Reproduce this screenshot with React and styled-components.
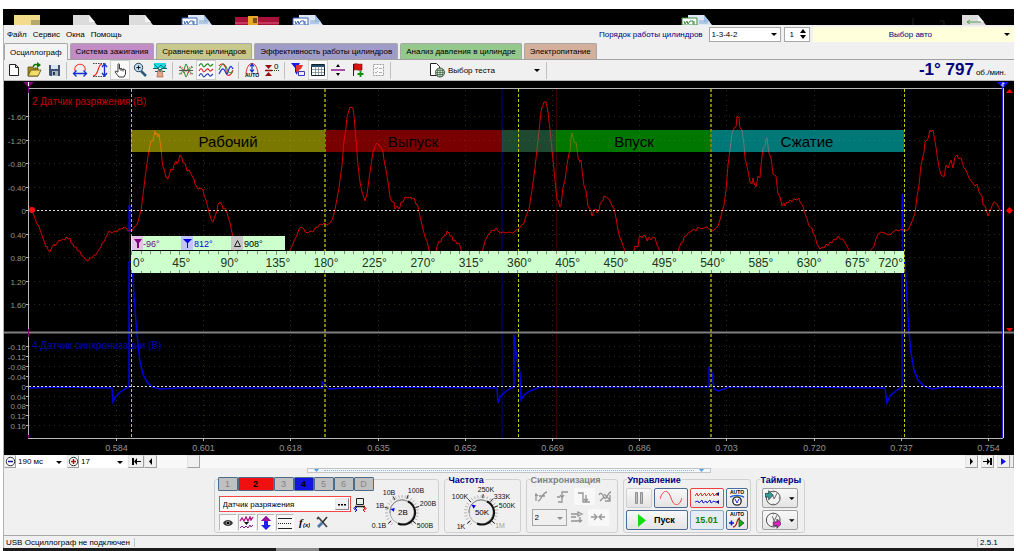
import { useState } from "react";
import styled, { createGlobalStyle } from "styled-components";

const GlobalStyle = createGlobalStyle`
  * {
    box-sizing: border-box;
  }
  body {
    margin: 0;
    background: #fff;
    font-family: "Liberation Sans", Arial, sans-serif;
    font-size: 8px;
    color: #000;
  }
  button, input, select {
    font: inherit;
    color: inherit;
    margin: 0;
  }
`;

const Page = styled.div`
  padding: 9px 10px 0 3px;
`;

const Window = styled.main`
  background: #f0f0f0;
  border-left: 1px solid #b4b4b4;
`;

/* ---------- desktop behind the window ---------- */

const DesktopStrip = styled.svg`
  display: block;
  width: 100%;
  background: #000;
`;

function Doc({ x, tag }) {
  return (
    <g transform={`translate(${x} 0)`}>
      <path d="M0 6h16l8 10H0z" fill={tag ? "#dbe7f5" : "#dcdcdc"} />
      <path d="M16 6v7h6z" fill={tag ? "#9fc0e6" : "#f4f4f4"} />
      {tag && <path d="M-6 9h15v7H-6z" fill="#fff" stroke={tag} />}
      {tag && <path d="M-4 12l1 3 2-3 1 3 2-3M2 12h3v3M6 12v4" stroke={tag} fill="none" />}
      {tag && <path d="M11 12h7M11 14h9" stroke="#8aa8d0" />}
    </g>
  );
}

function Desktop() {
  return (
    <DesktopStrip viewBox="3 0 1011 16" aria-hidden="true">
      <path d="M14 6h26v10H14z" fill="#f2dc8c" />
      <path d="M31 11h9v5h-9z" fill="#b5a76c" />
      <Doc x={73} />
      <Doc x={129} />
      <Doc x={188} tag="#3a62b4" />
      <path d="M235 8h44v8h-44z" fill="#a8123a" />
      <path d="M235 14h44" stroke="#e06080" />
      <path d="M248 7h10v9h-10z" fill="#e8a828" />
      <path d="M253 9h4v5h-4z" fill="#7c5210" />
      <Doc x={299} tag="#3a62b4" />
      <Doc x={688} tag="#3c8a3c" />
      <Doc x={962} />
      <path d="M967 13h14M970 11l-3 2 3 2" stroke="#58a058" fill="none" />
      <path d="M940 12h4v4M913 9v7" stroke="#222" fill="none" />
    </DesktopStrip>
  );
}

/* ---------- menu ---------- */

const MenuBar = styled.nav`
  display: flex;
  align-items: center;
  height: 18px;
  gap: 6px;
  padding-left: 3px;
  a {
    color: #000;
    text-decoration: none;
  }
`;

const OrderLabel = styled.label`
  margin-left: auto;
  color: #000080;
`;

const SelectBox = styled.span`
  position: relative;
  display: inline-block;
  width: ${(p) => p.$width}px;
  height: ${(p) => p.$height || 15}px;
  select {
    appearance: none;
    width: 100%;
    height: 100%;
    padding: 0 2px;
    border: ${(p) => (p.$flat ? "0" : "1px solid #a8a8a8")};
    border-radius: 0;
    background: ${(p) => (p.$disabled ? "#f0f0f0" : "#fff")};
    opacity: 1;
  }
  svg {
    position: absolute;
    right: 4px;
    top: calc(50% - 1px);
    pointer-events: none;
  }
`;

const Spinner = styled.span`
  display: flex;
  align-items: center;
  width: 26px;
  height: 15px;
  margin: 0 -3px;
  border: 1px solid #a8a8a8;
  background: #fff;
  input {
    width: 14px;
    padding: 0 0 0 5px;
    border: 0;
    background: transparent;
    appearance: textfield;
    outline: 0;
  }
  input::-webkit-inner-spin-button {
    display: none;
  }
`;

const CarButton = styled.button`
  display: flex;
  align-items: center;
  width: 20%;
  height: 15px;
  padding: 0 4px;
  border: 0;
  background: #ffffdc;
  color: #000080;
  span {
    flex: 1;
  }
`;

function Caret({ color = "#000" }) {
  return (
    <svg width="6" height="3" viewBox="0 0 6 3">
      <path d="M0 0h6L3 3z" fill={color} />
    </svg>
  );
}

function Select({ label, width, height, flat, disabled, options, caret, id }) {
  return (
    <SelectBox $width={width} $height={height} $flat={flat} $disabled={disabled}>
      <select id={id} aria-label={label} disabled={disabled}>
        {options.map((o) => (
          <option key={o}>{o}</option>
        ))}
      </select>
      <Caret color={caret} />
    </SelectBox>
  );
}

function Menu() {
  return (
    <MenuBar>
      {["Файл", "Сервис", "Окна", "Помощь"].map((m) => (
        <a href="#" key={m}>
          {m}
        </a>
      ))}
      <OrderLabel htmlFor="order">Порядок работы цилиндров</OrderLabel>
      <Select id="order" width={72} options={["1-3-4-2", "1-2-4-3"]} />
      <Spinner>
        <input type="number" defaultValue="1" aria-label="Цилиндр" />
        <svg width="8" height="10" viewBox="0 0 8 10">
          <path d="M1 4h6L4 0zM1 6h6L4 10z" />
        </svg>
      </Spinner>
      <CarButton>
        <span>Выбор авто</span>
        <Caret />
      </CarButton>
    </MenuBar>
  );
}

/* ---------- tabs ---------- */

const TabList = styled.div`
  display: flex;
  gap: 2px;
  height: 17px;
  border-bottom: 1px solid #a0a0a0;
`;

const Tab = styled.button`
  height: ${(p) => (p.$active ? 17 : 16)}px;
  padding: 0 5px;
  border: 1px solid #a8a8a8;
  border-bottom: 0;
  border-radius: 2px 2px 0 0;
  background: ${(p) => p.$color};
  white-space: nowrap;
`;

const tabs = [
  ["Осциллограф", "#f4f4f4"],
  ["Система зажигания", "#c48cc4"],
  ["Сравнение цилиндров", "#c8c88c"],
  ["Эффективность работы цилиндров", "#a09cc8"],
  ["Анализ давления в цилиндре", "#94c88c"],
  ["Электропитание", "#d4b09c"],
];

function Tabs() {
  const [active, setActive] = useState(0);
  return (
    <TabList role="tablist">
      {tabs.map(([name, color], i) => (
        <Tab
          key={name}
          role="tab"
          aria-selected={i === active}
          $active={i === active}
          $color={color}
          onClick={() => setActive(i)}
        >
          {name}
        </Tab>
      ))}
    </TabList>
  );
}

/* ---------- toolbar ---------- */

const Toolbar = styled.div`
  display: flex;
  align-items: center;
  height: 21px;
  border-bottom: 1px solid #b8b8b8;
`;

const ToolButton = styled.button`
  width: 20px;
  height: 20px;
  padding: 0;
  border: 1px solid ${(p) => (p.$pressed ? "#d0d0d0" : "transparent")};
  background: ${(p) => (p.$pressed ? "#fafafa" : "transparent")};
  svg {
    display: block;
    margin: -1px;
  }
`;

const Separator = styled.i`
  width: 1px;
  height: 17px;
  margin: 0 ${(p) => p.$right || 3}px 0 2px;
  background: #c0c0c0;
`;

const TestButton = styled.button`
  display: flex;
  align-items: center;
  gap: 3px;
  width: 115px;
  height: 20px;
  padding: 0 4px 0 0;
  border: 0;
  background: transparent;
  span {
    flex: 1;
    text-align: left;
  }
`;

const Readout = styled.output`
  margin-left: auto;
  margin-right: 8px;
  color: #000080;
  white-space: nowrap;
  b {
    font-size: 17px;
  }
  small {
    margin-left: 2px;
    font-size: 8px;
    color: #000;
  }
`;

const icons = {
  new: (
    <path d="M5.500 4.500h6l3 3v8h-9zM11.500 4.500v3h3" fill="#fff" stroke="#222" />
  ),
  open: (
    <>
      <path d="M4 7h4l1 1h5v8H4z" fill="#a88a20" stroke="#554a10" strokeWidth=".8" />
      <path d="M4 16l3-6h10l-3 6z" fill="#f4dc68" stroke="#554a10" strokeWidth=".8" />
      <path d="M9 7c1-3 3-3 5-2" stroke="#087808" strokeWidth="1.500" fill="none" />
      <path d="M13 2l4 3-4 3z" fill="#087808" />
    </>
  ),
  save: (
    <>
      <path d="M5 5h11v11H6l-1-1z" fill="#405070" />
      <path d="M7 5h7v4H7z" fill="#d8e4f0" />
      <path d="M8 11h6v5H8z" fill="#a8b4c4" />
      <path d="M9 12h2v3H9z" fill="#283850" />
    </>
  ),
  arc: (
    <>
      <path d="M5 11C3 2 17 2 15 11" stroke="#f02020" fill="none" />
      <path d="M3.500 13.500h13M6.500 10.500l-3 3 3 3M13.500 10.500l3 3-3 3" stroke="#1030d0" fill="none" strokeWidth="1.300" />
    </>
  ),
  height: (
    <>
      <path d="M3 16c6 0 4-11 9-12" stroke="#f02020" strokeWidth="1.200" fill="none" />
      <path d="M3 3.500h13M3 16.500h13" stroke="#444" strokeDasharray="1.500 1" />
      <path d="M14.500 4v12M12 7l2.500-3L17 7M12 13l2.500 3 2.500-3" stroke="#1030d0" fill="none" strokeWidth="1.300" />
    </>
  ),
  hand: (
    <path
      d="M8 12V4.500c0-1 1.500-1 1.500 0V9l1.500-.5 1.500.8 1.500-.2 1.500 1v4L14 17H9l-4-5c0-1 1.500-1.500 2 0zM11 8.500V11M13 9v2.500"
      fill="#fff"
      stroke="#222"
      strokeWidth=".9"
    />
  ),
  zoom: (
    <>
      <path d="M11 11l5 5" stroke="#2a5a78" strokeWidth="2.500" />
      <circle cx="8.500" cy="7.500" r="4.200" fill="#b8dcf4" stroke="#345" />
      <path d="M6.500 7.500h4M8.500 5.500v4" stroke="#111" />
    </>
  ),
  range: (
    <>
      <path d="M4 3h12v5H4z" fill="#20d8e0" />
      <path d="M4 4l4 4 3-3 3 3 2-3" stroke="#107880" fill="none" />
      <path d="M3 8.500h5l2 2 2-2h5M5 11.500h10" stroke="#086868" strokeWidth="1.200" fill="none" />
      <path d="M8 10l-1 7h6l-1-7-2 2z" fill="#e0a888" stroke="#a05030" strokeWidth=".6" />
    </>
  ),
  cross: (
    <>
      <path d="M3 7c2 0 3 3 4 3 2 0 2-6 3-6s2 6 3 6 2-3 4-3" stroke="#208a20" fill="none" />
      <path d="M3 14c2 0 3-3 4-3 2 0 2 6 3 6s2-6 3-6 2 3 4 3" stroke="#208a20" fill="none" />
      <path d="M4 6l12 9M16 6L4 15" stroke="#e03030" strokeDasharray="1.500 1" />
      <path d="M3 10.500h14" stroke="#555" />
    </>
  ),
  three: (
    <>
      <path d="M3 6c2-4 3-2 4 0s2 0 3-1 2-2 3 0 2 1 4-1" stroke="#208a20" strokeWidth="1.200" fill="none" />
      <path d="M3 11c2-4 3-2 4 0s2 0 3-1 2-2 3 0 2 1 4-1" stroke="#e03030" strokeWidth="1.200" fill="none" />
      <path d="M3 16c2-4 3-2 4 0s2 0 3-1 2-2 3 0 2 1 4-1" stroke="#2848b0" strokeWidth="1.200" fill="none" />
    </>
  ),
  mixed: (
    <>
      <path d="M3 6c4-5 7 0 7 5s4 7 7-1" stroke="#e03030" fill="none" strokeWidth="1.200" />
      <path d="M3 14c4-8 5-5 7-1 2 5 3-13 7-4" stroke="#2030d0" fill="none" strokeWidth="1.200" />
      <path d="M3 10c3-8 6-7 8-1s3 3 6 3" stroke="#208a20" fill="none" />
    </>
  ),
  auto: (
    <>
      <path d="M4 14C5 0 15 0 16 14" stroke="#e03030" fill="none" />
      <path d="M10 4v8M8 6.500L10 4l2 2.500M8 9.500l2 2.500 2-2.500" stroke="#1030d0" fill="none" strokeWidth="1.200" />
      <text x="10" y="17" fontSize="5" fontWeight="bold" textAnchor="middle">
        AUTO
      </text>
    </>
  ),
  zero: (
    <>
      <path d="M3 5h7L6.500 9zM3 16h7l-3.500-4z" fill="#980c0c" />
      <path d="M3 10.500h7" stroke="#980c0c" strokeWidth="1.500" />
      <path d="M10 10.500h7" stroke="#333" strokeDasharray="1 1" />
      <text x="12" y="9" fontSize="8">
        0
      </text>
    </>
  ),
  filter: (
    <>
      <path d="M3 3h9L9 8v7L7 12V8z" fill="#1818e8" />
      <path d="M8 5l7 0-2 4-2 1-1 4-2-3z" fill="#e03030" />
      <path d="M10.500 11.500h6v4h-6z" fill="#f0f0ff" stroke="#3838b0" />
    </>
  ),
  table: (
    <>
      <path d="M3.500 4.500h13v11h-13z" fill="#fff" stroke="#123" />
      <path d="M3 5h14v2H3z" fill="#204868" />
      <path d="M7.500 6v9M10.500 6v9M13.500 6v9M4 9.500h12M4 12.500h12" stroke="#68808c" strokeWidth=".7" />
    </>
  ),
  split: (
    <>
      <path d="M3 10h14" stroke="#901890" strokeWidth="1.500" />
      <path d="M8 7h4l-2-3zM8 13h4l-2 3z" />
    </>
  ),
  flag: (
    <>
      <path d="M5.500 4v12" stroke="#222" />
      <path d="M6 4c3-1 5 1 8 0v6c-3 1-5-1-8 0z" fill="#e01010" stroke="#600" strokeWidth=".6" />
      <path d="M12.500 11v6M9.500 14h6" stroke="#109010" strokeWidth="1.800" />
    </>
  ),
  list: (
    <>
      <path d="M5.500 4.500h10v11h-10z" fill="#fafafa" stroke="#999" strokeDasharray="2 1" />
      <path d="M7 8l1 1 2-2M7 12l1 1 2-2M11 8.500h3M11 12.500h3" stroke="#aaa" fill="none" />
    </>
  ),
};

const tools = [
  ["new", "Новый"],
  ["open", "Открыть"],
  ["save", "Сохранить"],
  null,
  ["arc", "Период"],
  ["height", "Амплитуда"],
  ["hand", "Перемещение", true],
  ["zoom", "Масштаб"],
  ["range", "Диапазон"],
  null,
  ["cross", "Совмещение"],
  ["three", "Раздельно", true],
  ["mixed", "Вместе"],
  null,
  ["auto", "Авто"],
  ["zero", "Ноль"],
  null,
  ["filter", "Фильтр"],
  ["table", "Таблица", true],
  ["split", "Разделить"],
  ["flag", "Метка"],
  ["list", "Список"],
  null,
];

function Tools() {
  return (
    <Toolbar>
      {tools.map((t, i) =>
        t ? (
          <ToolButton key={t[0]} aria-label={t[1]} $pressed={t[2]}>
            <svg width="20" height="20" viewBox="0 0 20 20" fill="#000">
              {icons[t[0]]}
            </svg>
          </ToolButton>
        ) : (
          <Separator key={i} $right={i === tools.length - 1 ? 38 : 3} />
        )
      )}
      <TestButton>
        <svg width="16" height="16" viewBox="0 0 16 16" fill="none">
          <path d="M1.500 1.500h6l3 3v9h-9z" fill="#fff" stroke="#222" />
          <circle cx="11" cy="10.500" r="4.500" fill="#d8e8d8" stroke="#385838" />
          <path d="M6.500 10.500h9M11 6v9M9 6.500c-1 3-1 5 0 8M13 6.500c1 3 1 5 0 8M7.500 8.500h7M7.500 12.500h7" stroke="#385838" strokeWidth=".7" />
        </svg>
        <span>Выбор теста</span>
        <Caret />
      </TestButton>
      <Separator />
      <Readout>
        <b>-1° 797</b>
        <small>об./мин.</small>
      </Readout>
    </Toolbar>
  );
}

/* ---------- oscillogram ---------- */

const Scope = styled.svg`
  display: block;
  width: 100%;
  background: #000;
  font-family: "Liberation Sans", Arial, sans-serif;
`;

const times = ["0.584", "0.601", "0.618", "0.635", "0.652", "0.669", "0.686", "0.703", "0.720", "0.737", "0.754"];
const topScale = ["-1.60", "-1.20", "-0.80", "-0.40", "0", "0.40", "0.80", "1.20", "1.60"];
const lowScale = ["-0.16", "-0.12", "-0.08", "-0.04", "0", "0.04", "0.08", "0.12", "0.16"];
const timeX = (i) => Math.round(116 + i * 87.2) + 0.5;
const topY = (i) => Math.round(116 + i * 23.5) + 0.5;
const lowY = (i) => Math.round(346 + i * 9.9) + 0.5;

// one band per stroke of the cycle
const phases = [
  { name: "Рабочий", from: 131, to: 325, text: 228, color: "#f4f000" },
  { name: "Выпуск", from: 325, to: 502, text: 413, color: "#f00000" },
  { name: "", from: 502, to: 556, text: 529, color: "#3c9060" },
  { name: "Впуск", from: 556, to: 711, text: 634, color: "#00f000" },
  { name: "Сжатие", from: 711, to: 904, text: 807, color: "#00f0f0" },
];

const vacuum =
  "29,206 32,210 34,216 36,221 37,224 39,226 40,230 43,238 46,247 47,246 48,250 50,252 52,247 54,244 55,246 57,243 59,240 60,241 63,239 65,240 66,237 68,239 70,238 71,243 73,244 74,247 76,247 78,251 80,251 81,255 83,256 85,259 88,261 90,258 92,258 94,255 96,255 98,251 101,247 102,243 104,242 106,237 109,231 112,233 115,231 117,232 119,229 122,229 124,227 126,228 128,231 130,230 132,231 134,227 136,226 138,222 141,210 143,195 146,170 149,150 151,141 153,141 155,131 156,135 157,133 158,137 159,134 161,148 162,160 163,167 164,169 166,177 168,179 170,172 171,169 173,170 174,165 176,161 177,164 178,162 180,155 182,158 183,163 185,163 187,171 189,170 191,174 194,179 195,184 198,189 201,188 203,190 204,195 206,200 208,208 209,212 211,219 213,222 215,216 217,211 218,204 220,202 222,205 223,209 225,208 227,213 230,223 233,237 235,262 284,262 290,250 293,244 294,241 297,235 298,232 299,229 301,227 304,229 305,232 308,233 310,231 313,232 315,228 318,227 320,224 322,225 324,223 327,225 330,223 332,220 334,214 336,204 339,188 342,165 344,140 346,128 347,117 349,110 350,107 353,108 354,116 356,140 358,165 360,182 362,192 363,195 365,201 367,194 370,172 373,152 375,146 377,143 379,145 381,147 383,152 384,160 386,170 388,182 390,197 392,202 394,202 395,209 397,206 399,209 400,207 401,202 403,202 405,197 408,198 410,197 412,199 414,198 416,204 418,206 419,212 422,225 425,237 427,241 429,250 431,262 434,262 437,246 439,241 441,242 442,238 444,236 446,235 447,231 449,233 450,236 452,236 453,241 455,240 457,244 459,243 461,249 463,262 480,262 483,249 485,241 488,235 490,233 492,230 494,231 496,228 498,231 500,233 503,232 506,233 509,232 513,233 516,230 518,230 521,226 524,223 526,216 529,209 532,190 535,168 538,140 541,112 542,107 543,105 544,102 546,102 548,112 550,130 553,160 556,190 557,199 558,200 560,207 561,205 563,188 565,180 567,165 569,153 570,152 571,139 572,133 574,142 575,143 576,142 577,149 578,158 580,162 581,160 582,170 584,186 586,191 588,206 590,209 591,211 592,216 594,210 596,209 597,213 599,210 600,204 603,200 604,196 606,197 609,199 611,203 612,206 614,208 616,218 618,230 619,235 621,240 624,248 626,262 632,262 634,250 635,246 638,247 639,238 640,236 642,238 644,235 646,237 647,241 649,237 651,240 653,237 655,238 657,245 659,249 661,262 676,262 679,248 681,243 683,242 684,237 687,235 688,233 692,231 693,229 696,231 698,227 701,229 704,228 707,227 710,230 713,231 716,228 718,226 720,220 722,212 724,205 726,190 728,165 731,142 732,133 734,128 736,127 737,116 739,118 740,128 742,130 744,145 745,158 748,171 750,182 752,184 753,178 754,183 756,187 757,182 758,176 760,178 761,165 763,148 765,146 766,140 767,138 768,146 769,153 771,158 773,174 776,176 777,186 778,194 780,197 782,206 784,203 785,206 787,202 788,203 790,200 792,202 794,199 797,200 799,198 800,202 803,206 804,211 807,219 809,226 812,228 813,233 815,236 817,244 820,249 822,247 824,248 826,244 828,246 830,242 832,243 834,239 836,240 838,236 840,239 843,239 845,243 847,246 849,250 853,262 866,262 871,250 874,246 876,239 878,234 881,232 885,233 888,235 891,234 893,232 896,230 899,231 901,229 904,231 908,230 910,226 913,219 915,213 917,197 919,185 921,165 924,152 925,142 928,139 930,130 931,132 933,130 934,136 936,147 937,155 939,167 941,175 944,177 946,165 948,168 951,160 953,168 955,157 957,155 959,159 961,158 964,168 966,170 969,178 972,182 975,186 977,184 979,192 982,196 983,205 985,206 988,216 990,211 992,206 994,202 997,204 1000,210 1002,211";

const sync =
  "29,388 60,387 112,388 113,402 115,398 119,393 125,389 129,387 129,262 132,262 134,295 136,322 138,345 140,362 143,374 147,382 152,387 160,389 178,388 322,388 322,382 325,385 329,389 345,388 400,387 497,388 498,403 500,397 505,392 511,388 514,387 514,335 516,352 518,364 520,372 521,400 524,395 530,391 540,387 600,387 709,387 709,367 712,373 714,389 718,391 730,387 800,387 885,388 887,403 890,396 897,390 902,387 902,262 905,262 907,300 909,332 911,353 914,370 918,380 924,386 932,389 945,387 1002,388";

function Ruler() {
  const ticks = Array.from({ length: 81 }, (_, i) => i);
  return (
    <g>
      <rect x="131" y="236" width="154" height="14" fill="#ccffcc" />
      <rect x="132" y="236" width="11" height="14" fill="#e4c4e4" />
      <rect x="181" y="236" width="12" height="14" fill="#c4c4fc" />
      <rect x="231" y="236" width="12" height="14" fill="#c8c8c8" />
      <path d="M134 239h8l-3 4v5h-2v-5z" fill="#800080" />
      <path d="M183 239h9l-4 4v5h-1v-5z" fill="#0000f0" />
      <path d="M234.500 246.500h6l-3-6z" fill="none" stroke="#222" />
      <g fontSize="9">
        <text x="143" y="247" fill="#800080">-96°</text>
        <text x="194" y="247" fill="#0000f0">812°</text>
        <text x="244" y="247">908°</text>
      </g>
      <rect x="131" y="251" width="773" height="22" fill="#ccffcc" />
      {ticks.map((i) => {
        const x = Math.round(131 + i * 9.66) + 0.5;
        return (
          <path key={i} d={`M${x} 251v${i % 5 ? 3 : 4}M${x} 273v${i % 5 ? -2 : -3}`} stroke="#444" strokeWidth=".6" />
        );
      })}
      <g fontSize="12" fill="#223322">
        <text x="133" y="267">0°</text>
        {ticks.slice(1, 16).map((i) => (
          <text key={i} x={133 + i * 48.3} y="267" textAnchor="middle">
            {i * 45}°
          </text>
        ))}
        <text x="903" y="267" textAnchor="end">720°</text>
      </g>
    </g>
  );
}

function Oscillogram() {
  return (
    <Scope viewBox="4 81 1010 374" role="img" aria-label="Осциллограмма">
      <g stroke="#2c2c14" strokeDasharray="1 4" fill="none">
        {times.map((t, i) => (
          <path key={t} d={`M${timeX(i)} 90V438`} />
        ))}
        {topScale.map((t, i) => (
          <path key={t} d={`M29 ${topY(i)}H1002`} />
        ))}
        {lowScale.map((t, i) => (
          <path key={t} d={`M29 ${lowY(i)}H1002`} />
        ))}
      </g>

      <g fill="#949494" fontSize="8" textAnchor="end">
        {topScale.map((t, i) => (
          <text key={t} x="26" y={topY(i) + 3}>{t}</text>
        ))}
        {lowScale.map((t, i) => (
          <text key={t} x="26" y={lowY(i) + 3}>{t}</text>
        ))}
      </g>
      <g fill="#949494" fontSize="9" textAnchor="middle">
        {times.map((t, i) => (
          <text key={t} x={timeX(i)} y="451">{t}</text>
        ))}
      </g>

      <path d="M502 89V438" stroke="#000040" strokeWidth="2" />
      <path d="M556.500 89V438" stroke="#380000" />

      <path d="M129.500 195V262M902.500 193V262" stroke="#0000c8" />
      <path d="M129.500 205V232M902.500 197V232" stroke="#0000ff" strokeWidth="2" />
      <polyline points={sync} fill="none" stroke="#0000e0" strokeWidth="1.500" />

      <polyline points={vacuum} fill="none" stroke="#d00000" strokeWidth="1" />

      <text x="32" y="105" fontSize="10" fill="#c80000">2 Датчик разряжения (В)</text>
      <text x="32" y="349" fontSize="10" fill="#0000b4">4 Датчик синхронизации (В)</text>

      {phases.map((p) => (
        <g key={p.from}>
          <rect x={p.from} y="130" width={p.to - p.from} height="22" fill={p.color} opacity=".5" />
          <text x={p.text} y="147" fontSize="15" textAnchor="middle" fill="#000">{p.name}</text>
        </g>
      ))}

      <path d="M29 210.500H1002M29 386.500H1002" stroke="#d8d8d8" strokeDasharray="2 2" />
      <path d="M131.500 89V438M518.500 89V438M904.500 89V438" stroke="#c8c800" strokeDasharray="3 2" />
      <path d="M325 89V438M711 89V438" stroke="#808000" strokeWidth="2" strokeDasharray="3 2" />

      <Ruler />

      <path d="M4 332.500H1014" stroke="#808080" strokeWidth="2" />
      <path d="M28.500 438V88.500H1002M28 438.500H1003" fill="none" stroke="#b8b8b8" />
      <path d="M28.500 329v8M28.500 435v3" stroke="#800080" />
      {topScale.map((t, i) => (
        <path key={t} d={`M26 ${topY(i)}h3`} stroke="#b8b8b8" />
      ))}
      {lowScale.map((t, i) => (
        <path key={t} d={`M26 ${lowY(i)}h3`} stroke="#b8b8b8" />
      ))}
      {times.map((t, i) => (
        <path key={t} d={`M${timeX(i)} 438v3`} stroke="#b8b8b8" />
      ))}
      <path d="M1002.500 84V438" stroke="#2020e0" />
      <path d="M1003.500 88V438" stroke="#e0e0ff" />
      <path d="M23 82h11l-5 5v6h-1v-6z" fill="#800080" />
      <path d="M28.500 82v4" stroke="#fff" />
      <path d="M997 82h12l-6 6z" fill="#1010ff" />
      <path d="M1002 83h2v1h-2v2h2" stroke="#fff" fill="none" strokeWidth=".8" />
      <circle cx="32" cy="210" r="3" fill="#f01010" />
      <path d="M1009.500 207l3.500 3.500-3.500 3.500-3.500-3.500zM1006 93h7l-3.500-4zM1006 328h7l-3.500 4z" fill="#f00" />
    </Scope>
  );
}

/* ---------- time scale and scroll ---------- */

const ScrollRow = styled.div`
  display: flex;
  align-items: center;
  height: 13px;
  background: #f8f8f8;
`;

const ScrollButton = styled.button`
  display: grid;
  place-items: center;
  width: ${(p) => p.$width || 13}px;
  height: 13px;
  margin-left: ${(p) => p.$gap || 0}px;
  padding: 0;
  border: 1px solid;
  border-color: #e4e4e4 #a0a0a0 #a0a0a0 #e4e4e4;
  background: #f0f0f0;
`;

const Track = styled.div`
  flex: 1;
  padding-left: 30px;
`;

const Thumb = styled.div`
  width: 13px;
  height: 13px;
  border: 1px solid;
  border-color: #e4e4e4 #a0a0a0 #a0a0a0 #e4e4e4;
  background: #f0f0f0;
`;

const Splitter = styled.div`
  display: flex;
  align-items: center;
  justify-content: space-between;
  width: 40%;
  height: 5px;
  margin: 0 auto;
  padding: 0 4px;
  border: 1px solid #c4c4c4;
  background: #f4f8fc;
  i {
    flex: 1;
    margin: 0 3px;
    border-top: 1px dotted #88b4e8;
  }
`;

function Sign({ plus }) {
  const color = plus ? "#b01010" : "#1010a0";
  return (
    <svg width="11" height="11" viewBox="0 0 11 11" fill="none">
      <circle cx="5.500" cy="5.500" r="4.200" stroke="#333" fill="#fff" />
      <path d={plus ? "M3 5.500h5M5.500 3v5" : "M3 5.500h5"} stroke={color} strokeWidth="1.500" />
    </svg>
  );
}

function Glyph({ d, color = "#000" }) {
  return (
    <svg width="9" height="7" viewBox="0 0 9 7">
      <path d={d} fill={color} />
    </svg>
  );
}

function TimeScale() {
  return (
    <>
      <ScrollRow>
        <ScrollButton $width={12} aria-label="Уменьшить"><Sign /></ScrollButton>
        <Select label="Развёртка" width={50} height={13} flat options={["190 мс", "100 мс"]} />
        <ScrollButton $width={12} $gap={1} aria-label="Увеличить"><Sign plus /></ScrollButton>
        <Select label="Масштаб" width={48} height={13} flat options={["17", "34"]} />
        <ScrollButton $width={16} $gap={1} aria-label="В начало">
          <Glyph d="M0 0h2v7H0zM2 3.500L5 0v3h4v1H5v3z" />
        </ScrollButton>
        <ScrollButton aria-label="Назад"><Glyph d="M6 0v7L3 3.500z" /></ScrollButton>
        <Track><Thumb /></Track>
        <ScrollButton aria-label="Вперёд"><Glyph d="M3 0v7l3-3.500z" /></ScrollButton>
        <ScrollButton $gap={3} aria-label="В конец">
          <Glyph d="M7 0h2v7H7zM7 3.500L4 0v3H0v1h4v3z" />
        </ScrollButton>
        <ScrollButton $gap={3} aria-label="Следить"><Glyph d="M2 0v7l5-3.500z" color="#1010f0" /></ScrollButton>
        <ScrollButton $width={4} aria-hidden="true" />
      </ScrollRow>
      <Splitter>
        <Glyph d="M2 2h5L4.500 5z" color="#50a0e8" />
        <i />
        <Glyph d="M2 2h5L4.500 5z" color="#50a0e8" />
      </Splitter>
    </>
  );
}

/* ---------- control panel ---------- */

const Panel = styled.div`
  display: flex;
  justify-content: center;
  gap: 5px;
  padding: 6px 0 2px;
  border-bottom: 1px solid #a8a8a8;
`;

const Group = styled.fieldset`
  position: relative;
  width: ${(p) => p.$width}px;
  height: 54px;
  margin: 0;
  padding: ${(p) => p.$pad || "0"};
  border: 1px solid #d0d0d0;
  border-radius: 3px;
`;

const GroupTitle = styled.legend`
  position: absolute;
  top: -5px;
  left: 3px;
  padding: 0 1px;
  line-height: 10px;
  font-size: 9px;
  font-weight: bold;
  color: ${(p) => (p.$muted ? "#808080" : "#000080")};
  background: #f0f0f0;
`;

const Row = styled.div`
  display: flex;
  align-items: center;
  gap: ${(p) => p.$gap || 0}px;
  margin-top: ${(p) => p.$top || 0}px;
`;

const ChannelLayout = styled.div`
  display: flex;
`;

const ChannelColumn = styled.div`
  width: 152px;
`;

// the channel keys stand on the frame of the group
const ChannelRow = styled.div`
  display: flex;
  margin: -3px 0 5px 3px;
`;

const SensorRow = styled.div`
  display: flex;
  align-items: center;
  gap: ${(p) => p.$gap || 0}px;
  padding-left: 4px;
  margin-bottom: 2px;
`;

const KnobSlot = styled.div`
  padding-top: 4px;
`;

const ChannelButton = styled.button`
  flex: none;
  width: ${(p) => (p.$wide ? 36 : 20)}px;
  height: 14px;
  padding: 0;
  border: 1px solid #4c6c8c;
  border-radius: 1px;
  background: ${(p) => p.$color || "#c0c0c0"};
  color: ${(p) => (p.$color ? "#000" : "#848484")};
  font-size: 9px;
  font-weight: ${(p) => (p.$color ? "bold" : "normal")};
`;

const SensorBox = styled.div`
  display: flex;
  width: 132px;
  height: 16px;
  padding: 1px;
  border: 1px solid #f04848;
  background: #fff;
  input {
    flex: 1;
    min-width: 0;
    padding: 0 2px;
    border: 0;
    background: transparent;
  }
  button {
    width: 14px;
    padding: 0;
    border: 1px solid;
    border-color: #e8e8e8 #888 #888 #e8e8e8;
    background: #f0f0f0;
    line-height: 6px;
  }
`;

const SmallTool = styled.button`
  width: 18px;
  height: 17px;
  padding: 0;
  border: 1px solid;
  border-color: ${(p) => (p.$pressed ? "#b8b8b8 #fff #fff #b8b8b8" : "transparent")};
  background: ${(p) => (p.$pressed ? "#f8f8f8" : "transparent")};
  svg {
    display: block;
    margin: auto;
  }
`;

const KnobBox = styled.label`
  position: relative;
  display: block;
  width: 70px;
  height: 47px;
  svg {
    display: block;
  }
  input {
    position: absolute;
    inset: 0;
    width: 100%;
    height: 100%;
    margin: 0;
    opacity: 0;
  }
`;

function Knob({ name, value, marks, pointer }) {
  const ticks = Array.from({ length: 25 }, (_, i) => 130 + i * 11.7);
  return (
    <KnobBox>
      <svg width="70" height="47" viewBox="0 0 70 47">
        {ticks.map((a) => {
          const c = Math.cos((a * Math.PI) / 180);
          const s = Math.sin((a * Math.PI) / 180);
          return (
            <path key={a} d={`M${35 + c * 14} ${28 + s * 14}L${35 + c * 17} ${28 + s * 17}`} stroke="#999" strokeWidth=".7" />
          );
        })}
        {marks.map((m) => {
          const c = Math.cos((m.angle * Math.PI) / 180);
          const s = Math.sin((m.angle * Math.PI) / 180);
          return (
            <path key={m.text} d={`M${35 + c * 14} ${28 + s * 14}L${35 + c * 18} ${28 + s * 18}`} stroke="#222" />
          );
        })}
        <circle cx="35" cy="28" r="12" fill="#ececec" stroke="#aaa" />
        <path d="M41 17.500A12 12 0 0 1 31 39.500" fill="none" stroke="#111" strokeWidth="2" />
        <path d="M41 17.500A12 12 0 0 0 23 29" fill="none" stroke="#888" />
        <path d="M0 0l4-2v4z" fill="#0000ff" transform={`rotate(${pointer} 35 28) translate(23 28)`} />
        <text x="36" y="31" fontSize="8" textAnchor="middle">{value}</text>
        <g fontSize="7" textAnchor="middle">
          {marks.map((m) => (
            <text key={m.text} x={m.x} y={m.y} fill={m.muted ? "#a0a0a0" : "#111"}>{m.text}</text>
          ))}
        </g>
      </svg>
      <input type="range" min="0" max="6" defaultValue="2" aria-label={name} />
    </KnobBox>
  );
}

const voltMarks = [
  { text: "0.1В", x: 12, y: 44, angle: 140 },
  { text: "1В", x: 13, y: 24, angle: 195 },
  { text: "10В", x: 22, y: 11, angle: 240 },
  { text: "100В", x: 49, y: 9, angle: 290 },
  { text: "200В", x: 61, y: 22, angle: 342 },
  { text: "500В", x: 58, y: 44, angle: 40 },
];

const rateMarks = [
  { text: "1K", x: 15, y: 45, angle: 140 },
  { text: "100K", x: 14, y: 15, angle: 225 },
  { text: "250K", x: 40, y: 8, angle: 277 },
  { text: "333K", x: 56, y: 15, angle: 312 },
  { text: "500K", x: 61, y: 24, angle: 340 },
  { text: "1M", x: 54, y: 44, angle: 40, muted: true },
];

const channels = [
  ["1"],
  ["2", "#f01010", true],
  ["3"],
  ["4", "#1414e0"],
  ["5"],
  ["6"],
  ["D"],
];

function ChannelPanel() {
  return (
    <Group $width={225}>
      <ChannelLayout>
        <ChannelColumn>
          <ChannelRow>
            {channels.map(([name, color, wide]) => (
              <ChannelButton key={name} $color={color} $wide={wide}>{name}</ChannelButton>
            ))}
          </ChannelRow>
          <SensorRow $gap={2}>
            <SensorBox>
              <input defaultValue="Датчик разряжения" aria-label="Датчик" />
              <button aria-label="Выбрать датчик">
                <svg width="8" height="2" viewBox="0 0 8 2">
                  <path d="M0 0h2v1.500H0zM3 0h2v1.500H3zM6 0h2v1.500H6z" />
                </svg>
              </button>
            </SensorBox>
            <svg width="14" height="15" viewBox="0 0 14 15" fill="none">
              <path d="M3.500 1.500h7v6h-7z" fill="#e4f0e4" stroke="#222" />
              <path d="M2 9.500h10" stroke="#222" strokeWidth="1.500" />
              <path d="M4 10.500c-4-1-4 2-1 2.500M2 11l2 2-2 2" stroke="#1010d0" />
              <path d="M10 10.500c4-1 4 2 1 2.500M12 11l-2 2 2 2" stroke="#e01010" />
            </svg>
          </SensorRow>
          <SensorRow $gap={1}>
            <SmallTool $pressed aria-label="Показать">
              <svg width="12" height="12" viewBox="0 0 12 12">
                <path d="M1 6c2-4 8-4 10 0-2 4-8 4-10 0z" fill="#333" />
                <circle cx="6" cy="6" r="1.800" fill="#000" stroke="#ddd" strokeWidth=".6" />
              </svg>
            </SmallTool>
            <SmallTool $pressed aria-label="Сглаживание">
              <svg width="15" height="14" viewBox="0 0 15 14" fill="none">
                <path d="M1 5l2-3 2 3 2-4 2 4 2-4 1 3 2-3" stroke="#b01080" strokeWidth="1.300" />
                <path d="M1 12l2-2 2 2 2-2 2 2 2-3 1 2 2-2" stroke="#802090" />
                <path d="M5 6h5L7.500 9z" fill="#111" />
              </svg>
            </SmallTool>
            <SmallTool $pressed aria-label="Инверсия">
              <svg width="12" height="14" viewBox="0 0 12 14">
                <path d="M6 0l5 5H8v4h3l-5 5-5-5h3V5H1z" fill="#2020f0" />
                <path d="M6 0l5 5H1z" fill="#a01090" />
              </svg>
            </SmallTool>
            <SmallTool $pressed aria-label="Сетка">
              <svg width="14" height="14" viewBox="0 0 14 14">
                <path d="M0 2.500h14M0 12.500h14" stroke="#222" />
                <path d="M0 7.500h14" stroke="#222" strokeDasharray="1 1" />
              </svg>
            </SmallTool>
            <SmallTool aria-label="Функция">
              <svg width="12" height="14" viewBox="0 0 12 14">
                <text x="1" y="10" fontSize="11" fontWeight="bold" fontStyle="italic" fontFamily="Liberation Serif">f</text>
                <text x="5" y="11" fontSize="6" fontWeight="bold" fontStyle="italic">(x)</text>
              </svg>
            </SmallTool>
            <SmallTool aria-label="Настройка">
              <svg width="13" height="13" viewBox="0 0 13 13" fill="none">
                <path d="M3 2l8 9M1 3l2-2" stroke="#444" strokeWidth="1.800" />
                <path d="M11 1L6 7" stroke="#333" strokeWidth="1.500" />
                <path d="M6 7l-4 4" stroke="#5078a8" strokeWidth="3" />
              </svg>
            </SmallTool>
          </SensorRow>
        </ChannelColumn>
        <KnobSlot>
          <Knob name="Предел" value="2В" marks={voltMarks} pointer={15} />
        </KnobSlot>
      </ChannelLayout>
    </Group>
  );
}

const DisabledIcon = styled.span`
  display: grid;
  place-items: center;
  width: 21px;
  height: 17px;
  background: ${(p) => (p.$on ? "#f8f8f8" : "transparent")};
`;

function SyncIcon({ d, on }) {
  return (
    <DisabledIcon $on={on}>
      <svg width="14" height="13" viewBox="0 0 14 13" fill="none">
        <path d={d} stroke="#949494" strokeWidth="1.300" />
      </svg>
    </DisabledIcon>
  );
}

const ControlButton = styled.button`
  display: flex;
  align-items: center;
  justify-content: center;
  gap: 8px;
  width: ${(p) => p.$width}px;
  height: 20px;
  padding: 0 2px;
  border: 1px solid ${(p) => p.$border || "#4c6c94"};
  border-radius: 2px;
  background: ${(p) => p.$fill || "linear-gradient(#f8f8f8, #e4e4e4)"};
  color: ${(p) => p.$color || "#000"};
  font-size: 9px;
  font-weight: bold;
`;

function TimerIcon({ arrow, color }) {
  return (
    <svg width="18" height="18" viewBox="0 0 18 18" fill="none">
      <circle cx="9" cy="9" r="7.500" fill="#f4f4f4" stroke="#444" />
      <path d="M8 5l2 5 3-6M9 3V2M15 9h1M9 15v1" stroke="#555" />
      <path d={arrow} fill={color} stroke="#222" strokeWidth=".7" />
    </svg>
  );
}

function Controls() {
  return (
    <Panel>
      <ChannelPanel />
      <Group $width={77} $pad="4px 0 0 1px">
        <GroupTitle>Частота</GroupTitle>
        <Knob name="Частота" value="50K" marks={rateMarks} pointer={38} />
      </Group>
      <Group $width={92} $pad="8px 0 0 5px">
        <GroupTitle $muted>Синхронизация</GroupTitle>
        <Row>
          <SyncIcon d="M1 4v7M0 6l1-2 2 2M3 11c3 0 4-8 9-9M4 6h6" />
          <SyncIcon d="M2 12h4V2h6M1 7h3M6 8l-2-3M6 8l2-3" />
          <SyncIcon d="M1 3h5v9h7M9 5v6M7 9l2 2 2-2" on />
          <SyncIcon d="M1 5c3-6 5 6 7 3s3-6 5-6M6 4l6 6M12 5v6H7M2 11l4-4" />
        </Row>
        <Row $top={4}>
          <Select label="Канал синхронизации" width={35} height={17} disabled options={["2"]} caret="#909090" />
          <SyncIcon d="M1 3h7M1 6h5M1 10h7M8 1l4 2-4 2zM10 6v5M8 9l2 2 2-2" />
          <SyncIcon d="M0 6h5M3 3l3 3-3 3M14 6H9M11 3L8 6l3 3" on />
        </Row>
      </Group>
      <Group $width={128} $pad="8px 2px 0">
        <GroupTitle>Управление</GroupTitle>
        <Row $gap={2}>
          <ControlButton $width={26} $border="#d0d0d0" aria-label="Пауза">
            <svg width="10" height="12" viewBox="0 0 10 12">
              <path d="M1.500.5h2v11h-2zM6.500.5h2v11h-2z" fill="#c0c0c0" stroke="#909090" />
            </svg>
          </ControlButton>
          <ControlButton $width={34} aria-label="Синус">
            <svg width="22" height="14" viewBox="0 0 22 14" fill="none">
              <path d="M0 8C3-2 8-2 11 7s8 9 11 0" stroke="#f04040" />
            </svg>
          </ControlButton>
          <ControlButton $width={34} $border="#f04040" aria-label="Сигналы">
            <svg width="26" height="14" viewBox="0 0 26 14" fill="none">
              <path d="M1 5l2-3 1 3 3-3 1 3 3-3 1 3 3-3 1 3 3-3 1 3 3-3v3" stroke="#e03030" />
              <path d="M1 11l3-1 1 2 3-3 1 3 3-2 1 2 3-3 1 3 3-2 1 1h3" stroke="#2020d0" />
              <path d="M25 1v4l-3-2zM25 9v4l-3-2z" fill="#101080" />
            </svg>
          </ControlButton>
          <ControlButton $width={22} aria-label="Авто масштаб">
            <svg width="16" height="18" viewBox="0 0 16 18" fill="none">
              <text x="8" y="5" fontSize="5" textAnchor="middle" fill="#000">AUTO</text>
              <path d="M1 8c4-2 10-2 14 0" stroke="#2060e0" strokeWidth="1.500" />
              <circle cx="8" cy="12" r="4.200" fill="#fff" stroke="#222" strokeWidth="1.300" />
              <path d="M6 10l2 4 2-4" stroke="#2020d0" />
            </svg>
          </ControlButton>
        </Row>
        <Row $gap={2} $top={2}>
          <ControlButton $width={62}>
            <svg width="8" height="13" viewBox="0 0 8 13">
              <path d="M0 0l8 6.500L0 13z" fill="#10e010" />
            </svg>
            Пуск
          </ControlButton>
          <ControlButton $width={34} $color="#108010" $border="#88a8c8" $fill="#e4ecf4">15.01</ControlButton>
          <ControlButton $width={22} aria-label="Авто пуск">
            <svg width="16" height="18" viewBox="0 0 16 18" fill="none">
              <text x="8" y="5" fontSize="5" textAnchor="middle" fill="#000">AUTO</text>
              <path d="M0 12h5M2.500 9.500v5" stroke="#1010e0" strokeWidth="1.500" />
              <path d="M4 16c5 0 3-9 7-9" stroke="#b02020" strokeWidth="1.300" />
              <path d="M10 8l5 4-5 4z" fill="#10b010" stroke="#104010" strokeWidth=".7" />
            </svg>
          </ControlButton>
        </Row>
      </Group>
      <Group $width={49} $pad="8px 5px 0">
        <GroupTitle>Таймеры</GroupTitle>
        <Row>
          <ControlButton $width={36} $border="#a0a0a0" aria-label="Таймер запуска">
            <TimerIcon arrow="M0 4h4V1l5 5-5 5V8H0z" color="#30a098" />
            <Caret />
          </ControlButton>
        </Row>
        <Row $top={2}>
          <ControlButton $width={36} $border="#a0a0a0" aria-label="Таймер остановки">
            <TimerIcon arrow="M9 11h4V8l5 5-5 5v-3H9z" color="#e020c0" />
            <Caret />
          </ControlButton>
        </Row>
      </Group>
    </Panel>
  );
}

/* ---------- status ---------- */

const StatusBar = styled.footer`
  display: flex;
  align-items: center;
  height: 12px;
  span {
    padding: 0 4px 0 2px;
  }
  span:first-child {
    width: 131px;
    margin-right: auto;
    border-right: 1px solid #c4c4c4;
    white-space: nowrap;
  }
  span:last-child {
    width: 37px;
    border-left: 1px solid #c4c4c4;
  }
`;

const Taskbar = styled.div`
  display: flex;
  height: 3px;
  padding-left: 27%;
  background: #1c1c1c;
  i {
    width: 43px;
    background: #888;
  }
`;

export default function App() {
  return (
    <>
      <GlobalStyle />
      <Page>
        <Desktop />
        <Window>
          <Menu />
          <Tabs />
          <Tools />
          <Oscillogram />
          <TimeScale />
          <Controls />
          <StatusBar>
            <span>USB Осциллограф не подключен</span>
            <span>2.5.1</span>
          </StatusBar>
        </Window>
        <Taskbar>
          <i />
        </Taskbar>
      </Page>
    </>
  );
}
